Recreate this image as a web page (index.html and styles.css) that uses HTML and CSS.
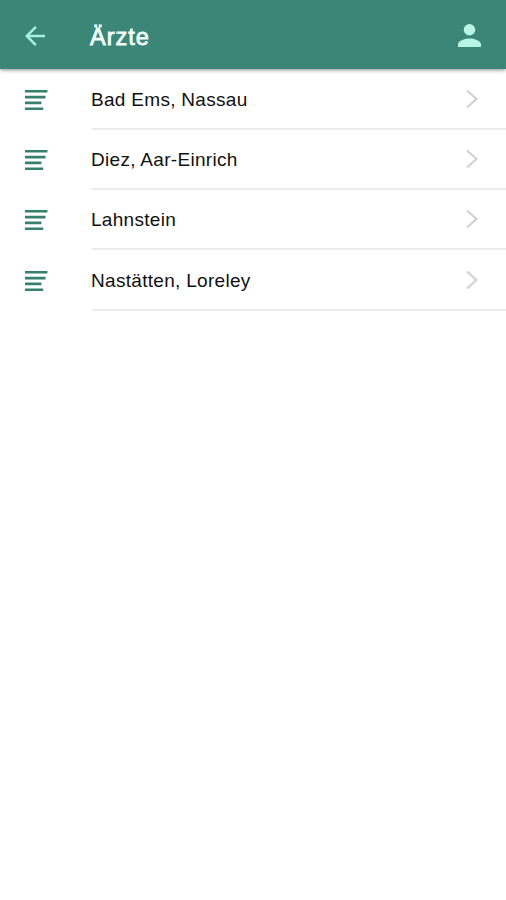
FILE: index.html
```html
<!DOCTYPE html>
<html lang="de">
<head>
<meta charset="utf-8">
<title>Ärzte</title>
<link rel="stylesheet" href="styles.css">
</head>
<body>
<svg class="defs" aria-hidden="true">
  <symbol id="lines" viewBox="0 0 24 22"><path d="M1 2.2h22.4M1 8.1h20.5M1 13.9h16.4M1 19.8h18.2"/></symbol>
  <symbol id="chevron" viewBox="0 0 14 20"><path d="M2 1.5L11.5 10L2 18.5"/></symbol>
</svg>
<header class="bar">
  <svg class="back" viewBox="0 0 24 24"><path d="M20 11H7.83l5.59-5.59L12 4l-8 8 8 8 1.41-1.41L7.83 13H20z"/></svg>
  <h1 class="title">Ärzte</h1>
  <svg class="person" viewBox="4 4 16 16"><path d="M12 12a4 4 0 1 0 0-8 4 4 0 0 0 0 8zm0 2c-2.67 0-8 1.34-8 4v2h16v-2c0-2.66-5.33-4-8-4z"/></svg>
</header>
<main class="list">
  <a class="row"><svg class="lines"><use href="#lines"/></svg><span class="body"><span class="label">Bad Ems, Nassau</span><svg class="chevron"><use href="#chevron"/></svg></span></a>
  <a class="row"><svg class="lines"><use href="#lines"/></svg><span class="body"><span class="label">Diez, Aar-Einrich</span><svg class="chevron"><use href="#chevron"/></svg></span></a>
  <a class="row"><svg class="lines"><use href="#lines"/></svg><span class="body"><span class="label">Lahnstein</span><svg class="chevron"><use href="#chevron"/></svg></span></a>
  <a class="row"><svg class="lines"><use href="#lines"/></svg><span class="body"><span class="label">Nastätten, Loreley</span><svg class="chevron"><use href="#chevron"/></svg></span></a>
</main>
</body>
</html>
```
FILE: styles.css
```css
* { box-sizing: border-box; }
body { margin: 0; min-height: 900px; background: #fff; color: #111; font-family: "Liberation Sans", Arial, sans-serif; }
.defs { display: none; }
.bar { height: 69px; padding: 2px 25px 0 20px; display: flex; align-items: center; background: #3b8677; box-shadow: 0 1px 4px rgba(0,0,0,.45); }
.back { width: 30px; height: 30px; fill: #a9f0e0; }
.title { flex: 1; margin: 2px 0 0 40px; font-size: 23.5px; font-weight: 400; line-height: 28px; letter-spacing: 1px; color: #effffb; -webkit-text-stroke: .8px #effffb; }
.person { width: 23px; height: 23px; fill: #b9f5e7; }
.list { padding-top: .5px; }
.row { height: 60.3px; display: flex; align-items: center; padding-left: 24px; }
.lines { width: 24px; height: 22px; fill: none; stroke: #36806d; stroke-width: 2.6; }
.body { flex: 1; align-self: stretch; margin-left: 44px; padding-right: 27px; display: flex; align-items: center; border-bottom: 2px solid #ebebeb; }
.label { flex: 1; margin: 2px 0 0 -1px; font-size: 19px; line-height: 24px; letter-spacing: .3px; }
.chevron { width: 14px; height: 20px; fill: none; stroke: #d2d2d4; stroke-width: 2.2; }
```
